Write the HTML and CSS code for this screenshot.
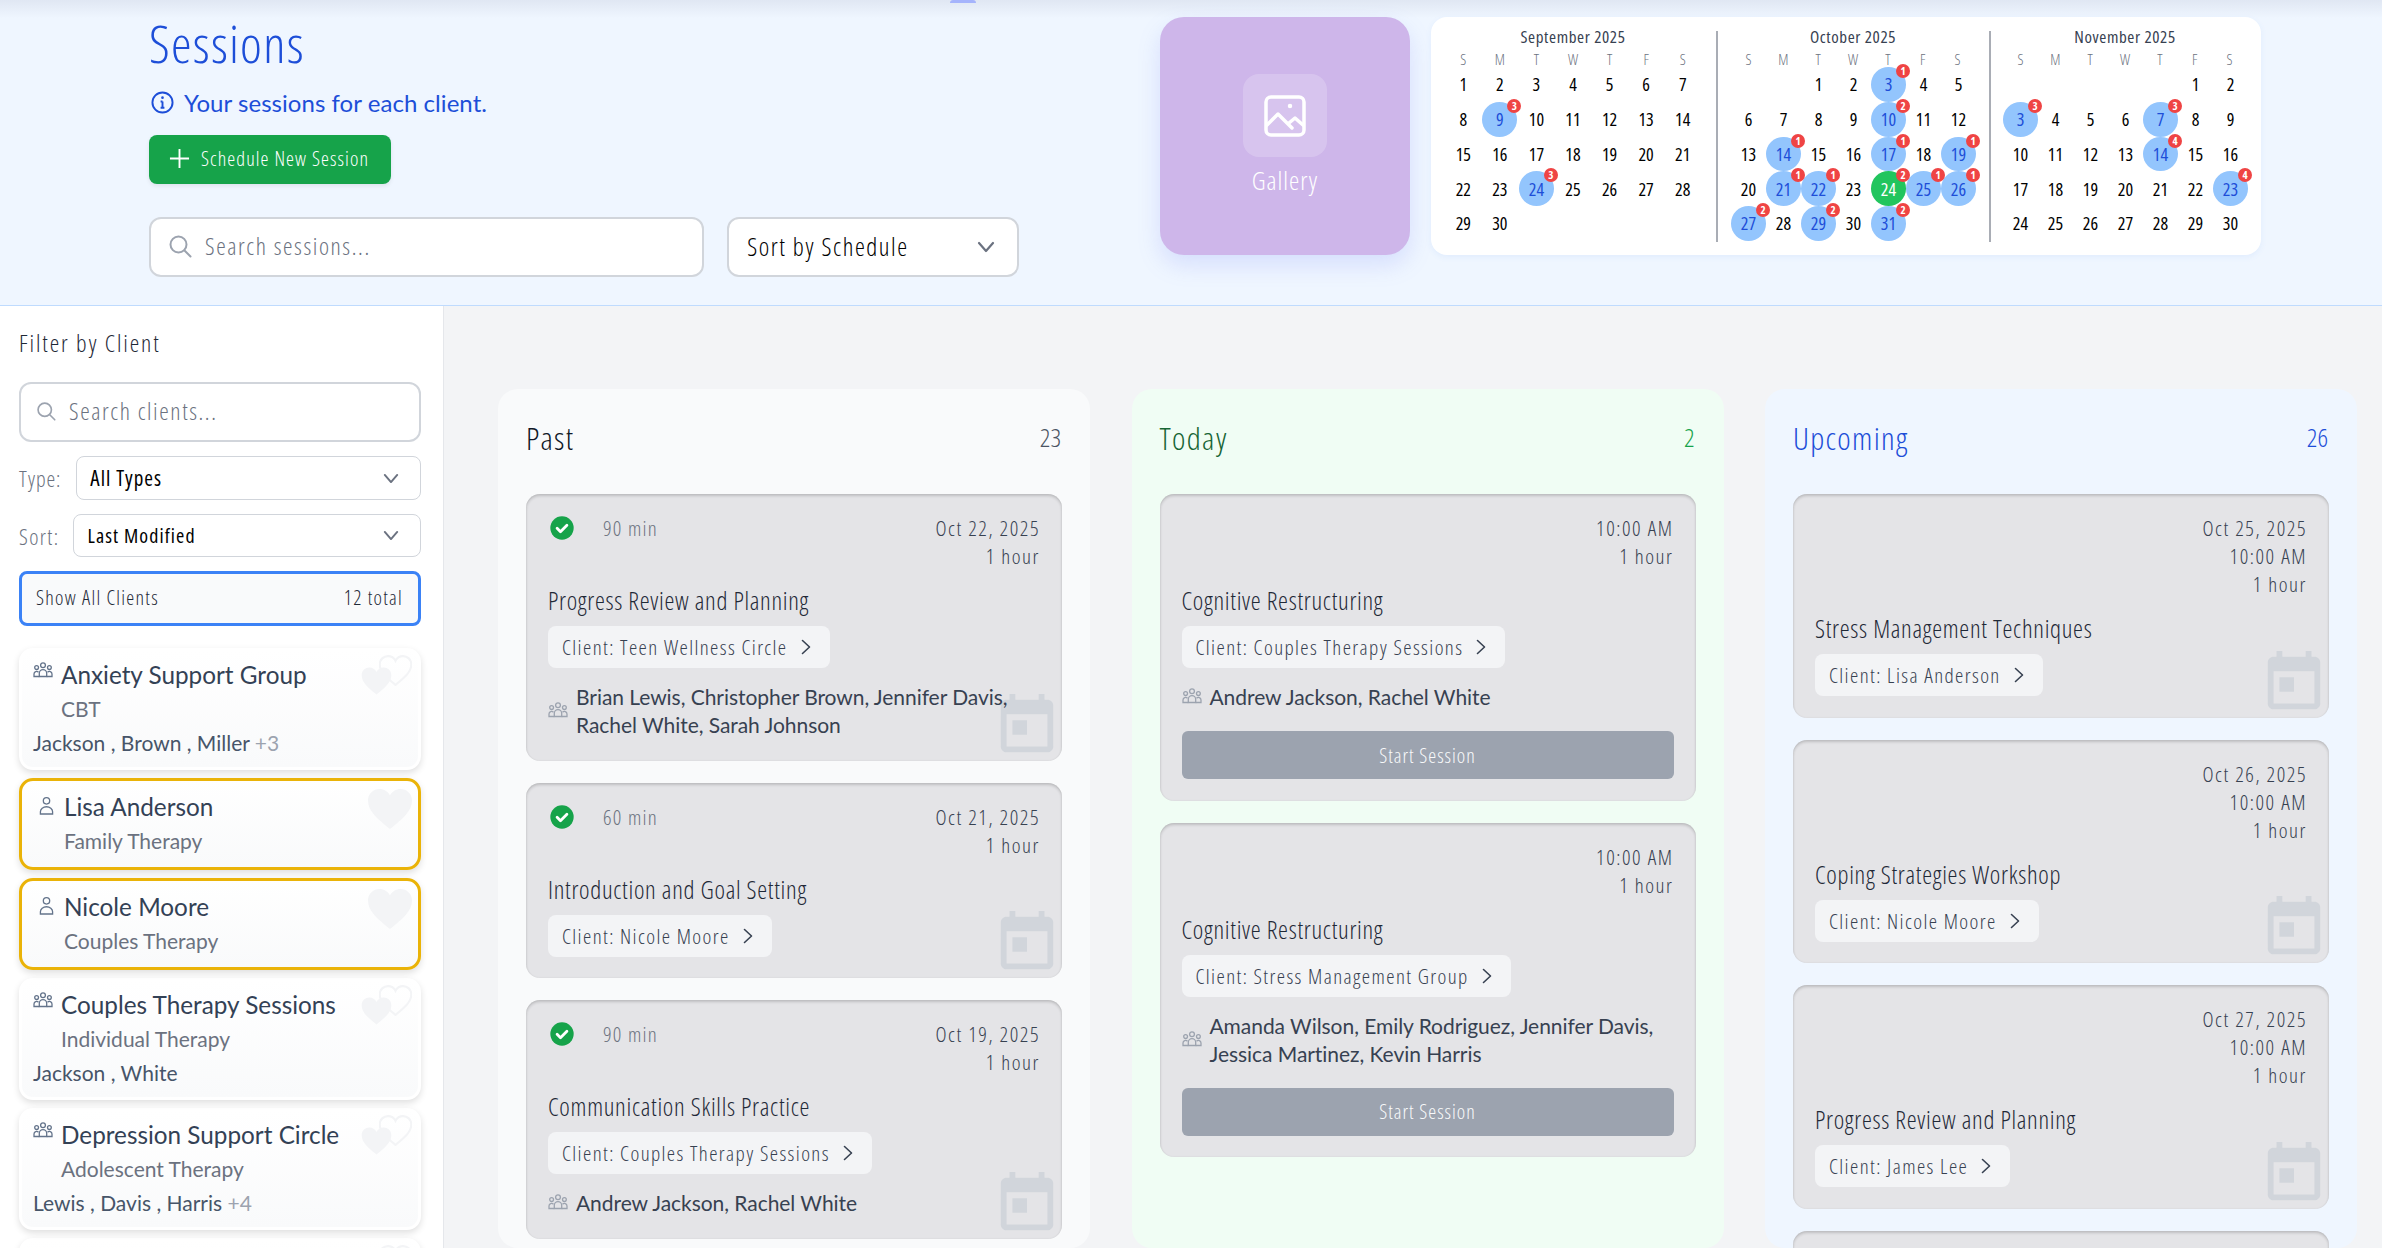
FILE: index.html
```html
<!DOCTYPE html>
<html lang="en">
<head>
    <meta charset="UTF-8">
    <meta content="width=device-width, initial-scale=1.0" name="viewport">
    <title>Sessions</title>
    <link rel="stylesheet" href="styles.css">
</head>
<body>
<svg class="sprite" width="0" height="0">
    <symbol id="i-group" viewBox="0 0 20 20">
        <g fill="none" stroke="currentColor" stroke-width="1.3">
            <circle cx="10" cy="4.2" r="2.4"/>
            <circle cx="3.6" cy="6.6" r="1.9"/>
            <circle cx="16.4" cy="6.6" r="1.9"/>
            <path d="M6.3 15.5v-3.2a3.7 3.7 0 0 1 7.4 0v3.2z"/>
            <path d="M6.3 15.5H1v-2.6a2.6 2.6 0 0 1 4.5-1.7"/>
            <path d="M13.7 15.5H19v-2.6a2.6 2.6 0 0 0-4.5-1.7"/>
        </g>
    </symbol>
    <symbol id="i-person" viewBox="0 0 16 20">
        <g fill="none" stroke="currentColor" stroke-width="1.4">
            <circle cx="8" cy="4.5" r="3.4"/>
            <path d="M1.5 18.5v-2.3a6.5 5.4 0 0 1 13 0v2.3z"/>
        </g>
    </symbol>
    <symbol id="i-today" viewBox="0 0 24 24">
        <path fill="currentColor" d="M19 3h-1V1h-2v2H8V1H6v2H5c-1.11 0-1.99.9-1.99 2L3 19c0 1.1.89 2 2 2h14c1.1 0 2-.9 2-2V5c0-1.1-.9-2-2-2zm0 16H5V8h14v11zM7 10h5v5H7z"/>
    </symbol>
    <symbol id="i-check" viewBox="0 0 24 24">
        <circle cx="12" cy="12" r="10" fill="#16a34a"/>
        <path d="M7.8 12.3l2.9 2.9 5.5-5.6" fill="none" stroke="#fff" stroke-width="2.4" stroke-linecap="round" stroke-linejoin="round"/>
    </symbol>
    <symbol id="i-chev-right" viewBox="0 0 10 16">
        <path d="M1.5 1.5L8.5 8l-7 6.5" fill="none" stroke="currentColor" stroke-width="1.6" stroke-linecap="round" stroke-linejoin="round"/>
    </symbol>
    <symbol id="i-chev-down" viewBox="0 0 18 12">
        <path d="M2 2l7 8 7-8" fill="none" stroke="currentColor" stroke-width="2.2" stroke-linecap="round" stroke-linejoin="round"/>
    </symbol>
    <symbol id="i-search" viewBox="0 0 24 24">
        <circle cx="10.5" cy="10.5" r="8" fill="none" stroke="currentColor" stroke-width="2"/>
        <path d="M16.5 16.5l6 6" fill="none" stroke="currentColor" stroke-width="2" stroke-linecap="round"/>
    </symbol>
    <symbol id="i-heart" viewBox="0 0 46 42">
        <path d="M23 41C10 30.500 1 23 1 12.500 1 5.500 6.500 1 12.500 1 17 1 21 3.500 23 7.500 25 3.500 29 1 33.500 1 39.500 1 45 5.500 45 12.500 45 23 36 30.500 23 41z"/>
    </symbol>
</svg>

<header class="top">
    <span class="top-mark"></span>
    <div class="top-left">
        <h1>Sessions</h1>
        <p class="top-info">
            <svg class="info-icon" viewBox="0 0 24 24"><circle cx="12" cy="12" r="10.500" fill="none" stroke="currentColor" stroke-width="2"/><path d="M12 11v6.500M10 11h2M10 17.500h4" fill="none" stroke="currentColor" stroke-width="2"/><circle cx="12" cy="7" r="1.400" fill="currentColor"/></svg>
            Your sessions for each client.
        </p>
        <button class="new-btn"><svg viewBox="0 0 22 22"><path d="M11 1v20M1 11h20" stroke="#fff" stroke-width="2"/></svg>Schedule New Session</button>
        <div class="top-tools">
            <div class="search top-search"><svg><use href="#i-search"/></svg>Search sessions...</div>
            <div class="select top-sort">Sort by Schedule<svg><use href="#i-chev-down"/></svg></div>
        </div>
    </div>

    <a class="gallery">
        <span class="gallery-box">
            <svg viewBox="0 0 42 42" fill="none" stroke="#fff" stroke-width="3.500" stroke-linecap="round" stroke-linejoin="round">
                <rect x="2" y="2" width="38" height="38" rx="5"/>
                <path d="M3 30l11-11 14 14M25 28l6-5 8 7"/>
                <circle cx="26" cy="11" r="1.500" fill="#fff" stroke-width="1.500"/>
            </svg>
        </span>
        <span class="gallery-label">Gallery</span>
    </a>

    <div class="calendar">
        <div class="month month-sep">
            <div class="month-title">September 2025</div>
            <div class="weekdays"><span>S</span><span>M</span><span>T</span><span>W</span><span>T</span><span>F</span><span>S</span></div>
            <div class="days">
                <span>1</span><span>2</span><span>3</span><span>4</span><span>5</span><span>6</span><span>7</span>
                <span>8</span><span class="has">9<b>3</b></span><span>10</span><span>11</span><span>12</span><span>13</span><span>14</span>
                <span>15</span><span>16</span><span>17</span><span>18</span><span>19</span><span>20</span><span>21</span>
                <span>22</span><span>23</span><span class="has">24<b>3</b></span><span>25</span><span>26</span><span>27</span><span>28</span>
                <span>29</span><span>30</span>
            </div>
        </div>
        <div class="month month-oct">
            <div class="month-title">October 2025</div>
            <div class="weekdays"><span>S</span><span>M</span><span>T</span><span>W</span><span>T</span><span>F</span><span>S</span></div>
            <div class="days">
                <span></span><span></span><span>1</span><span>2</span><span class="has">3<b>1</b></span><span>4</span><span>5</span>
                <span>6</span><span>7</span><span>8</span><span>9</span><span class="has">10<b>2</b></span><span>11</span><span>12</span>
                <span>13</span><span class="has">14<b>1</b></span><span>15</span><span>16</span><span class="has">17<b>1</b></span><span>18</span><span class="has">19<b>1</b></span>
                <span>20</span><span class="has">21<b>1</b></span><span class="has">22<b>1</b></span><span>23</span><span class="has now">24<b>2</b></span><span class="has">25<b>1</b></span><span class="has">26<b>1</b></span>
                <span class="has">27<b>2</b></span><span>28</span><span class="has">29<b>2</b></span><span>30</span><span class="has">31<b>2</b></span>
            </div>
        </div>
        <div class="month month-nov">
            <div class="month-title">November 2025</div>
            <div class="weekdays"><span>S</span><span>M</span><span>T</span><span>W</span><span>T</span><span>F</span><span>S</span></div>
            <div class="days">
                <span></span><span></span><span></span><span></span><span></span><span>1</span><span>2</span>
                <span class="has">3<b>3</b></span><span>4</span><span>5</span><span>6</span><span class="has">7<b>3</b></span><span>8</span><span>9</span>
                <span>10</span><span>11</span><span>12</span><span>13</span><span class="has">14<b>4</b></span><span>15</span><span>16</span>
                <span>17</span><span>18</span><span>19</span><span>20</span><span>21</span><span>22</span><span class="has">23<b>4</b></span>
                <span>24</span><span>25</span><span>26</span><span>27</span><span>28</span><span>29</span><span>30</span>
            </div>
        </div>
    </div>
</header>

<div class="page">
    <aside class="sidebar">
        <h2>Filter by Client</h2>
        <div class="search side-search"><svg><use href="#i-search"/></svg>Search clients...</div>
        <div class="filter-row">
            <label>Type:</label>
            <div class="select side-select">All Types<svg><use href="#i-chev-down"/></svg></div>
        </div>
        <div class="filter-row filter-row-sort">
            <label>Sort:</label>
            <div class="select side-select">Last Modified<svg><use href="#i-chev-down"/></svg></div>
        </div>
        <div class="show-all"><span>Show All Clients</span><span>12 total</span></div>

        <div class="client-list">
            <div class="client group">
                <div class="client-name"><svg><use href="#i-group"/></svg>Anxiety Support Group</div>
                <div class="client-type">CBT</div>
                <div class="client-members">Jackson , Brown , Miller <em>+3</em></div>
                <svg class="heart-a"><use href="#i-heart"/></svg>
                <svg class="heart-b"><use href="#i-heart"/></svg>
            </div>
            <div class="client single">
                <div class="client-name"><svg><use href="#i-person"/></svg>Lisa Anderson</div>
                <div class="client-type">Family Therapy</div>
                <svg class="heart-big"><use href="#i-heart"/></svg>
            </div>
            <div class="client single">
                <div class="client-name"><svg><use href="#i-person"/></svg>Nicole Moore</div>
                <div class="client-type">Couples Therapy</div>
                <svg class="heart-big"><use href="#i-heart"/></svg>
            </div>
            <div class="client group">
                <div class="client-name"><svg><use href="#i-group"/></svg>Couples Therapy Sessions</div>
                <div class="client-type">Individual Therapy</div>
                <div class="client-members">Jackson , White</div>
                <svg class="heart-a"><use href="#i-heart"/></svg>
                <svg class="heart-b"><use href="#i-heart"/></svg>
            </div>
            <div class="client group">
                <div class="client-name"><svg><use href="#i-group"/></svg>Depression Support Circle</div>
                <div class="client-type">Adolescent Therapy</div>
                <div class="client-members">Lewis , Davis , Harris <em>+4</em></div>
                <svg class="heart-a"><use href="#i-heart"/></svg>
                <svg class="heart-b"><use href="#i-heart"/></svg>
            </div>
            <div class="client group client-empty">
                <svg class="heart-a"><use href="#i-heart"/></svg>
                <svg class="heart-b"><use href="#i-heart"/></svg>
            </div>
        </div>
    </aside>

    <main class="board">
        <section class="col col-past">
            <div class="col-head"><h3>Past</h3><span>23</span></div>

            <article class="card">
                <div class="card-top">
                    <div class="card-status"><svg><use href="#i-check"/></svg><span>90 min</span></div>
                    <div class="card-when">Oct 22, 2025<br>1 hour</div>
                </div>
                <div class="card-title">Progress Review and Planning</div>
                <a class="chip">Client: Teen Wellness Circle<svg><use href="#i-chev-right"/></svg></a>
                <div class="people"><svg><use href="#i-group"/></svg><span>Brian Lewis, Christopher Brown, Jennifer Davis,<br>Rachel White, Sarah Johnson</span></div>
                <svg class="card-cal"><use href="#i-today"/></svg>
            </article>

            <article class="card">
                <div class="card-top">
                    <div class="card-status"><svg><use href="#i-check"/></svg><span>60 min</span></div>
                    <div class="card-when">Oct 21, 2025<br>1 hour</div>
                </div>
                <div class="card-title">Introduction and Goal Setting</div>
                <a class="chip">Client: Nicole Moore<svg><use href="#i-chev-right"/></svg></a>
                <svg class="card-cal"><use href="#i-today"/></svg>
            </article>

            <article class="card">
                <div class="card-top">
                    <div class="card-status"><svg><use href="#i-check"/></svg><span>90 min</span></div>
                    <div class="card-when">Oct 19, 2025<br>1 hour</div>
                </div>
                <div class="card-title">Communication Skills Practice</div>
                <a class="chip">Client: Couples Therapy Sessions<svg><use href="#i-chev-right"/></svg></a>
                <div class="people"><svg><use href="#i-group"/></svg><span>Andrew Jackson, Rachel White</span></div>
                <svg class="card-cal"><use href="#i-today"/></svg>
            </article>
        </section>

        <section class="col col-today">
            <div class="col-head"><h3>Today</h3><span>2</span></div>

            <article class="card">
                <div class="card-top">
                    <div></div>
                    <div class="card-when">10:00 AM<br>1 hour</div>
                </div>
                <div class="card-title">Cognitive Restructuring</div>
                <a class="chip">Client: Couples Therapy Sessions<svg><use href="#i-chev-right"/></svg></a>
                <div class="people"><svg><use href="#i-group"/></svg><span>Andrew Jackson, Rachel White</span></div>
                <button class="start-btn">Start Session</button>
            </article>

            <article class="card">
                <div class="card-top">
                    <div></div>
                    <div class="card-when">10:00 AM<br>1 hour</div>
                </div>
                <div class="card-title">Cognitive Restructuring</div>
                <a class="chip">Client: Stress Management Group<svg><use href="#i-chev-right"/></svg></a>
                <div class="people"><svg><use href="#i-group"/></svg><span>Amanda Wilson, Emily Rodriguez, Jennifer Davis,<br>Jessica Martinez, Kevin Harris</span></div>
                <button class="start-btn">Start Session</button>
            </article>
        </section>

        <section class="col col-upcoming">
            <div class="col-head"><h3>Upcoming</h3><span>26</span></div>

            <article class="card">
                <div class="card-top">
                    <div></div>
                    <div class="card-when">Oct 25, 2025<br>10:00 AM<br>1 hour</div>
                </div>
                <div class="card-title">Stress Management Techniques</div>
                <a class="chip">Client: Lisa Anderson<svg><use href="#i-chev-right"/></svg></a>
                <svg class="card-cal"><use href="#i-today"/></svg>
            </article>

            <article class="card">
                <div class="card-top">
                    <div></div>
                    <div class="card-when">Oct 26, 2025<br>10:00 AM<br>1 hour</div>
                </div>
                <div class="card-title">Coping Strategies Workshop</div>
                <a class="chip">Client: Nicole Moore<svg><use href="#i-chev-right"/></svg></a>
                <svg class="card-cal"><use href="#i-today"/></svg>
            </article>

            <article class="card">
                <div class="card-top">
                    <div></div>
                    <div class="card-when">Oct 27, 2025<br>10:00 AM<br>1 hour</div>
                </div>
                <div class="card-title">Progress Review and Planning</div>
                <a class="chip">Client: James Lee<svg><use href="#i-chev-right"/></svg></a>
                <svg class="card-cal"><use href="#i-today"/></svg>
            </article>

            <article class="card card-empty"></article>
        </section>
    </main>
</div>
</body>
</html>
```
FILE: styles.css
```css
* {
    box-sizing: border-box;
}

html, body {
    height: 100%;
}

body {
    margin: 0;
    overflow: hidden;
    display: flex;
    flex-direction: column;
    background: #f3f4f6;
    color: #1f2937;
    font-family: "Open Sans", sans-serif;
    font-stretch: 75%;
    font-weight: 300;
}

.sprite {
    position: absolute;
}

/* top band */
.top {
    position: relative;
    flex: none;
    height: 306px;
    display: flex;
    padding: 17px 0 0 149px;
    background: linear-gradient(#e0e7f3, #eff6ff 18px);
    border-bottom: 1px solid #bfdbfe;
}

.top-mark {
    position: absolute;
    top: 0;
    left: 950px;
    width: 26px;
    height: 3px;
    background: #a5b4fc;
    border-radius: 8px 8px 0 0;
}

.top-left {
    width: 870px;
    margin-right: 141px;
}

h1 {
    margin: -4px 0 0;
    font-size: 52px;
    font-weight: 300;
    line-height: 60px;
    letter-spacing: 1.3px;
    color: #1d4ed8;
}

.top-info {
    display: flex;
    align-items: center;
    gap: 10px;
    height: 26px;
    margin: 16px 0 0 2px;
    font-family: Lato, sans-serif;
    font-stretch: normal;
    font-weight: 400;
    font-size: 24px;
    letter-spacing: 0.05px;
    color: #1d4ed8;
}

.info-icon {
    width: 23px;
    height: 23px;
}

.new-btn {
    display: flex;
    align-items: center;
    gap: 11px;
    width: 242px;
    height: 49px;
    margin-top: 20px;
    padding: 0 0 2px 20px;
    border: 0;
    border-radius: 8px;
    background: #16a34a;
    box-shadow: 0 2px 4px rgba(0, 0, 0, 0.08);
    color: #fff;
    font: inherit;
    font-size: 20px;
    letter-spacing: 1.1px;
}

.new-btn svg {
    width: 21px;
    height: 21px;
}

.top-tools {
    display: flex;
    gap: 23px;
    margin-top: 33px;
}

.search, .select {
    display: flex;
    align-items: center;
    background: #fff;
    border: 2px solid #d1d5db;
    border-radius: 12px;
}

.search {
    color: #6b7280;
}

.search svg {
    color: #9ca3af;
}

.select {
    justify-content: space-between;
    color: #000;
}

.select svg {
    color: #6b7280;
}

.top-search {
    width: 556px;
    height: 60px;
    padding: 0 0 3px 17px;
    gap: 13px;
    font-size: 24px;
    letter-spacing: 1.6px;
}

.top-search svg {
    width: 24px;
    height: 24px;
}

.top-sort {
    width: 292px;
    height: 60px;
    padding: 0 22px 3px 18px;
    font-size: 25px;
    letter-spacing: 1.55px;
}

.top-sort svg {
    width: 18px;
    height: 12px;
    margin-top: 3px;
}

/* gallery tile */
.gallery {
    flex: none;
    width: 250px;
    height: 238px;
    display: flex;
    flex-direction: column;
    align-items: center;
    justify-content: center;
    gap: 5px;
    background: #ceb6ea;
    border-radius: 24px;
    box-shadow: 0 10px 22px rgba(129, 140, 248, 0.22);
}

.gallery-box {
    width: 84px;
    height: 83px;
    display: flex;
    align-items: center;
    justify-content: center;
    background: rgba(255, 255, 255, 0.2);
    border-radius: 16px;
}

.gallery-box svg {
    width: 42px;
    height: 42px;
}

.gallery-label {
    color: #fff;
    font-size: 26px;
    line-height: 36px;
    letter-spacing: 1px;
}

/* three month calendar */
.calendar {
    flex: none;
    width: 830px;
    height: 238px;
    margin-left: 21px;
    display: grid;
    grid-template-columns: 273px 273px 256px;
    padding: 14px 13px 13px 14px;
    background: #fff;
    border-radius: 16px;
    box-shadow: 0 2px 6px rgba(59, 130, 246, 0.08);
}

.month {
    padding-right: 15px;
    border-right: 2px solid #a9adb5;
}

.month-oct {
    padding-left: 13px;
    padding-right: 14px;
}

.month-nov {
    padding-left: 12px;
    padding-right: 0;
    border-right: 0;
}

.month-title {
    height: 13px;
    margin-top: -1px;
    margin-bottom: 8px;
    text-align: center;
    font-size: 17px;
    font-weight: 500;
    line-height: 13px;
    letter-spacing: 0.6px;
    color: #374151;
}

.weekdays, .days {
    display: grid;
    grid-template-columns: repeat(7, 1fr);
    justify-items: center;
}

.weekdays {
    height: 16px;
    font-size: 15px;
    line-height: 16px;
    color: #6b7280;
}

.days {
    grid-auto-rows: 34.75px;
}

.days span {
    position: relative;
    width: 35px;
    display: flex;
    align-items: center;
    justify-content: center;
    border-radius: 50%;
    color: #000;
    font-size: 18px;
    font-weight: 500;
}

.days .has {
    background: #93c5fd;
    color: #1d4ed8;
}

.days .now {
    background: #22c55e;
    color: #fff;
}

.days b {
    position: absolute;
    z-index: 1;
    top: -3px;
    right: -4px;
    width: 14px;
    height: 14px;
    border-radius: 50%;
    background: #ef4444;
    color: #fff;
    font-size: 11px;
    font-weight: 700;
    line-height: 14px;
    text-align: center;
}

/* body */
.page {
    flex: 1;
    min-height: 0;
    display: flex;
}

.sidebar {
    flex: none;
    width: 444px;
    padding: 0 22px 0 19px;
    overflow: hidden;
    background: #fff;
    border-right: 1px solid #e5e7eb;
}

h2 {
    margin: 21px 0 0;
    height: 32px;
    font-size: 24px;
    font-weight: 300;
    line-height: 32px;
    letter-spacing: 1.9px;
    color: #1f2937;
}

.side-search {
    height: 60px;
    margin-top: 23px;
    padding: 0 0 3px 15px;
    gap: 13px;
    font-size: 24px;
    letter-spacing: 1.6px;
}

.side-search svg {
    width: 20px;
    height: 20px;
}

.filter-row {
    display: flex;
    align-items: center;
    gap: 15px;
    margin-top: 14px;
    font-size: 22px;
}

.filter-row label {
    color: #6b7280;
    letter-spacing: 0.9px;
}

.filter-row-sort {
    gap: 14px;
}

.filter-row-sort label {
    letter-spacing: 1.4px;
}

.side-select {
    flex: 1;
    height: 44px;
    padding: 0 21px 0 13px;
    border-width: 1.5px;
    border-radius: 8px;
    font-weight: 400;
    font-size: 21px;
    letter-spacing: 1px;
}

.filter-row-sort .side-select {
    height: 43px;
    font-size: 20px;
    letter-spacing: 1.1px;
}

.side-select svg {
    width: 16px;
    height: 11px;
}

.show-all {
    display: flex;
    justify-content: space-between;
    align-items: center;
    height: 55px;
    margin-top: 14px;
    padding: 0 15px 2px 14px;
    background: #f9fafb;
    border: 3px solid #3b82f6;
    border-radius: 8px;
    font-size: 20px;
    letter-spacing: 1.3px;
    color: #1f2937;
}

.client-list {
    display: flex;
    flex-direction: column;
    gap: 8px;
    margin-top: 22px;
}

.client {
    position: relative;
    flex: none;
    border: 3px solid transparent;
    border-radius: 14px;
    padding: 5px 8px 7px 11px;
    background: linear-gradient(#fff, #f9fafb) padding-box;
    box-shadow: 0 3px 7px rgba(0, 0, 0, 0.13);
    font-family: Lato, sans-serif;
    font-stretch: normal;
    font-weight: 400;
}

.client.single {
    height: 92px;
    padding: 8px 8px 0 11px;
    border-color: #eab308;
}

.client-empty {
    height: 122px;
}

.client-name {
    display: flex;
    align-items: center;
    gap: 8px;
    height: 36px;
    font-size: 24.3px;
    color: #334155;
}

.client-name svg {
    flex: none;
    position: relative;
    top: -3px;
    width: 20px;
    height: 20px;
    color: #64748b;
}

.client.single .client-name {
    gap: 10px;
    height: 35px;
}

.client.single .client-name svg {
    top: -1px;
    width: 21px;
    height: 20px;
    padding-left: 6px;
}

.client-type {
    height: 34px;
    padding-left: 28px;
    font-size: 21px;
    line-height: 34px;
    color: #6b7280;
}

.client.single .client-type {
    padding-left: 31px;
}

.client-members {
    height: 34px;
    font-size: 21px;
    line-height: 34px;
    color: #475569;
}

.client-members em {
    font-style: normal;
    color: #9ca3af;
}

.heart-a, .heart-b, .heart-big {
    position: absolute;
}

.heart-a {
    top: 15px;
    right: 26px;
    width: 31px;
    height: 30px;
    fill: #f3f4f6;
}

.heart-b {
    top: 4px;
    right: 6px;
    width: 33px;
    height: 31px;
    fill: none;
    stroke: #f3f4f6;
    stroke-width: 3px;
}

.heart-big {
    top: 7px;
    right: 5px;
    width: 46px;
    height: 42px;
    fill: #f3f4f6;
}

/* board */
.board {
    flex: 1;
    min-width: 0;
    display: flex;
    gap: 41.5px;
    padding: 83px 25px 0 54px;
    overflow: hidden;
}

.col {
    flex: 1 1 0;
    min-width: 0;
    padding: 28px 28px 0;
    border-radius: 20px;
    display: flex;
    flex-direction: column;
    gap: 22px;
}

.col-past {
    background: #f9fafb;
}

.col-today {
    background: #f0fdf4;
}

.col-upcoming {
    background: #eff6ff;
}

.col-head {
    display: flex;
    justify-content: space-between;
    align-items: center;
    height: 40px;
    margin-bottom: 15px;
    padding-right: 1px;
    font-size: 26px;
    color: #4b5563;
}

.col-head h3 {
    margin: 0;
    font-size: 32px;
    font-weight: 300;
    letter-spacing: 1.3px;
    color: #111827;
}

.col-today h3 {
    color: #166534;
}

.col-today .col-head span {
    color: #16a34a;
}

.col-upcoming h3, .col-upcoming .col-head span {
    color: #1d4ed8;
}

.card {
    position: relative;
    flex: none;
    padding: 20px 22px 21.5px;
    background: #e4e4e7;
    border-radius: 14px;
    box-shadow: inset 0 2px 3px rgba(0, 0, 0, 0.16), inset 0 0 2px rgba(0, 0, 0, 0.08);
}

.card-empty {
    height: 224px;
}

.card-top {
    display: flex;
    justify-content: space-between;
    margin-bottom: 14px;
    font-size: 21px;
    line-height: 28px;
}

.card-status {
    display: flex;
    align-items: flex-start;
    gap: 27px;
    color: #6b7280;
    letter-spacing: 1.3px;
}

.card-status svg {
    width: 28px;
    height: 28px;
}

.card-when {
    text-align: right;
    color: #374151;
    letter-spacing: 1.55px;
}

.card-title {
    height: 33px;
    margin-bottom: 9px;
    font-size: 25px;
    line-height: 33px;
    letter-spacing: 0.7px;
    color: #1f2937;
}

.chip {
    display: inline-flex;
    align-items: center;
    gap: 13px;
    height: 42px;
    padding: 0 19px 0 14px;
    background: #f3f4f6;
    border-radius: 8px;
    font-size: 21px;
    letter-spacing: 1.4px;
    color: #374151;
    vertical-align: top;
}

.chip svg {
    width: 10px;
    height: 16px;
    color: #374151;
}

.people {
    position: relative;
    z-index: 1;
    display: flex;
    align-items: center;
    gap: 8px;
    margin-top: 15px;
    font-family: Lato, sans-serif;
    font-stretch: normal;
    font-weight: 400;
    font-size: 21px;
    line-height: 28px;
    letter-spacing: -0.05px;
    color: #374151;
}

.people svg {
    flex: none;
    width: 20px;
    height: 20px;
    color: #9ca3af;
}

.start-btn {
    display: block;
    width: 100%;
    height: 48px;
    margin-top: 20px;
    border: 0;
    border-radius: 6px;
    background: #9ca3af;
    color: #f9fafb;
    font: inherit;
    font-size: 20px;
    letter-spacing: 1px;
}

.card-cal {
    position: absolute;
    right: 0;
    bottom: 0;
    width: 70px;
    height: 70px;
    color: #d1d5db;
}
```
